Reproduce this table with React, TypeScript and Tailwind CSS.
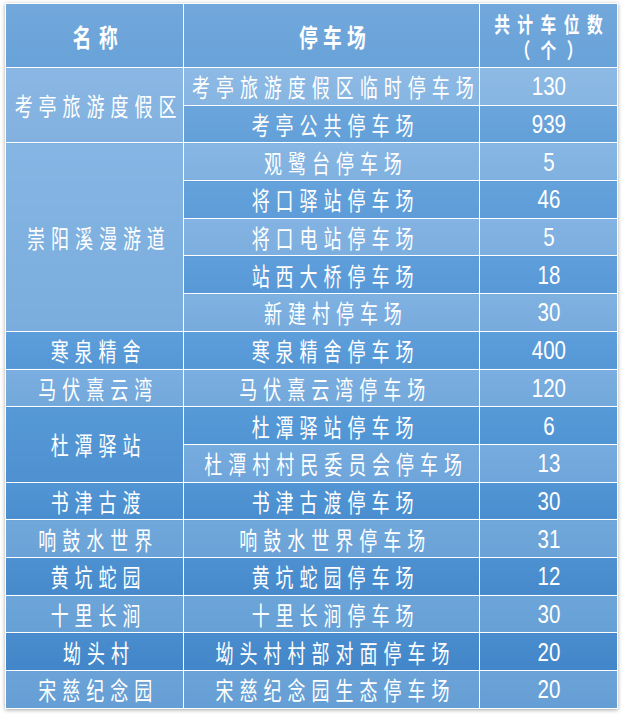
import type { ReactNode } from "react";

type Row = {
  name?: string;
  span?: number;
  nameBg?: string;
  lot: string;
  count: string;
  bg: string;
};

const rows: Row[] = [
  {
    name: "考亭旅游度假区",
    span: 2,
    nameBg: "bg-gradient-to-b from-[#8ab7e4] to-[#82b1df]",
    lot: "考亭旅游度假区临时停车场",
    count: "130",
    bg: "bg-gradient-to-b from-[#8dbae5] to-[#86b5e1]",
  },
  { lot: "考亭公共停车场", count: "939", bg: "bg-gradient-to-b from-[#6ba5dc] to-[#63a0d8]" },
  {
    name: "崇阳溪漫游道",
    span: 5,
    nameBg: "bg-gradient-to-b from-[#85b5e3] to-[#7aaddd]",
    lot: "观鹭台停车场",
    count: "5",
    bg: "bg-gradient-to-b from-[#87b6e3] to-[#80b1df]",
  },
  { lot: "将口驿站停车场", count: "46", bg: "bg-gradient-to-b from-[#65a2dc] to-[#5d9cd8]" },
  { lot: "将口电站停车场", count: "5", bg: "bg-gradient-to-b from-[#83b3e2] to-[#7caedf]" },
  { lot: "站西大桥停车场", count: "18", bg: "bg-gradient-to-b from-[#5f9edb] to-[#5898d6]" },
  { lot: "新建村停车场", count: "30", bg: "bg-gradient-to-b from-[#7fb1e1] to-[#78abdd]" },
  {
    name: "寒泉精舍",
    nameBg: "bg-gradient-to-b from-[#5d9edb] to-[#5597d5]",
    lot: "寒泉精舍停车场",
    count: "400",
    bg: "bg-gradient-to-b from-[#5d9edb] to-[#5597d5]",
  },
  {
    name: "马伏熹云湾",
    nameBg: "bg-gradient-to-b from-[#7baee0] to-[#73a8db]",
    lot: "马伏熹云湾停车场",
    count: "120",
    bg: "bg-gradient-to-b from-[#7baee0] to-[#73a8db]",
  },
  {
    name: "杜潭驿站",
    span: 2,
    nameBg: "bg-gradient-to-b from-[#5699d7] to-[#4f91d0]",
    lot: "杜潭驿站停车场",
    count: "6",
    bg: "bg-gradient-to-b from-[#579ad8] to-[#5094d3]",
  },
  { lot: "杜潭村村民委员会停车场", count: "13", bg: "bg-gradient-to-b from-[#76abde] to-[#6fa5da]" },
  {
    name: "书津古渡",
    nameBg: "bg-gradient-to-b from-[#5195d4] to-[#4a8ecf]",
    lot: "书津古渡停车场",
    count: "30",
    bg: "bg-gradient-to-b from-[#5195d4] to-[#4a8ecf]",
  },
  {
    name: "响鼓水世界",
    nameBg: "bg-gradient-to-b from-[#71a8db] to-[#6aa2d7]",
    lot: "响鼓水世界停车场",
    count: "31",
    bg: "bg-gradient-to-b from-[#71a8db] to-[#6aa2d7]",
  },
  {
    name: "黄坑蛇园",
    nameBg: "bg-gradient-to-b from-[#4d91d1] to-[#468acc]",
    lot: "黄坑蛇园停车场",
    count: "12",
    bg: "bg-gradient-to-b from-[#4d91d1] to-[#468acc]",
  },
  {
    name: "十里长涧",
    nameBg: "bg-gradient-to-b from-[#6da5d9] to-[#66a0d5]",
    lot: "十里长涧停车场",
    count: "30",
    bg: "bg-gradient-to-b from-[#6da5d9] to-[#66a0d5]",
  },
  {
    name: "坳头村",
    nameBg: "bg-gradient-to-b from-[#498dce] to-[#4286c9]",
    lot: "坳头村村部对面停车场",
    count: "20",
    bg: "bg-gradient-to-b from-[#498dce] to-[#4286c9]",
  },
  {
    name: "宋慈纪念园",
    nameBg: "bg-gradient-to-b from-[#6ba3d8] to-[#659ed4]",
    lot: "宋慈纪念园生态停车场",
    count: "20",
    bg: "bg-gradient-to-b from-[#6ba3d8] to-[#659ed4]",
  },
];

// the source render is squeezed sideways, so glyphs get scaled on x
function Squeeze({ children, className }: { children: ReactNode; className: string }) {
  return (
    <div className="flex justify-center">
      <span className={"inline-block shrink-0 whitespace-nowrap " + className}>{children}</span>
    </div>
  );
}

const cjk =
  "scale-x-[0.72] font-['Noto_Sans_CJK_SC','Noto_Sans',sans-serif] text-[25px] leading-[30px] tracking-[8.3px] -mr-[8.3px]";
const num = "scale-x-[0.82] font-['Liberation_Sans',Arial,sans-serif] text-[25px] leading-[30px]";
const cell = "border-[1.5px] border-white p-0 ";

export default function App() {
  return (
    <div className="min-h-screen bg-white pt-[3px] pl-[5px]">
      <table className="w-[612px] table-fixed border-collapse text-white shadow-[0_1px_4px_rgba(0,0,0,0.35)]">
        <colgroup>
          <col className="w-[178px]" />
          <col className="w-[296px]" />
          <col className="w-[138px]" />
        </colgroup>
        <thead>
          <tr className="h-[64px] bg-gradient-to-b from-[#72a8dc] to-[#68a2d8]">
            <th className={cell + "font-bold"}>
              <Squeeze className="scale-x-[0.75] font-['Noto_Sans_CJK_SC',sans-serif] text-[25px] leading-[30px] tracking-[10px] -mr-[10px]">
                名称
              </Squeeze>
            </th>
            <th className={cell + "font-bold"}>
              <Squeeze className="scale-x-[0.75] font-['Noto_Sans_CJK_SC',sans-serif] text-[25px] leading-[30px] tracking-[7px] -mr-[7px]">
                停车场
              </Squeeze>
            </th>
            <th className={cell + "font-bold"}>
              <Squeeze className="scale-x-[0.75] text-center font-['Noto_Sans_CJK_SC',sans-serif] text-[21px] leading-[26px]">
                <span className="tracking-[10px] -mr-[10px]">共计车位数</span>
                <br />
                <span className="tracking-[14px] -mr-[14px]">（个）</span>
              </Squeeze>
            </th>
          </tr>
        </thead>
        <tbody>
          {rows.map((r) => (
            <tr key={r.lot} className="h-[37.7px]">
              {r.name && (
                <td rowSpan={r.span ?? 1} className={cell + r.nameBg}>
                  <Squeeze className={cjk}>{r.name}</Squeeze>
                </td>
              )}
              <td className={cell + r.bg}>
                <Squeeze className={cjk}>{r.lot}</Squeeze>
              </td>
              <td className={cell + r.bg}>
                <Squeeze className={num}>{r.count}</Squeeze>
              </td>
            </tr>
          ))}
        </tbody>
      </table>
    </div>
  );
}
